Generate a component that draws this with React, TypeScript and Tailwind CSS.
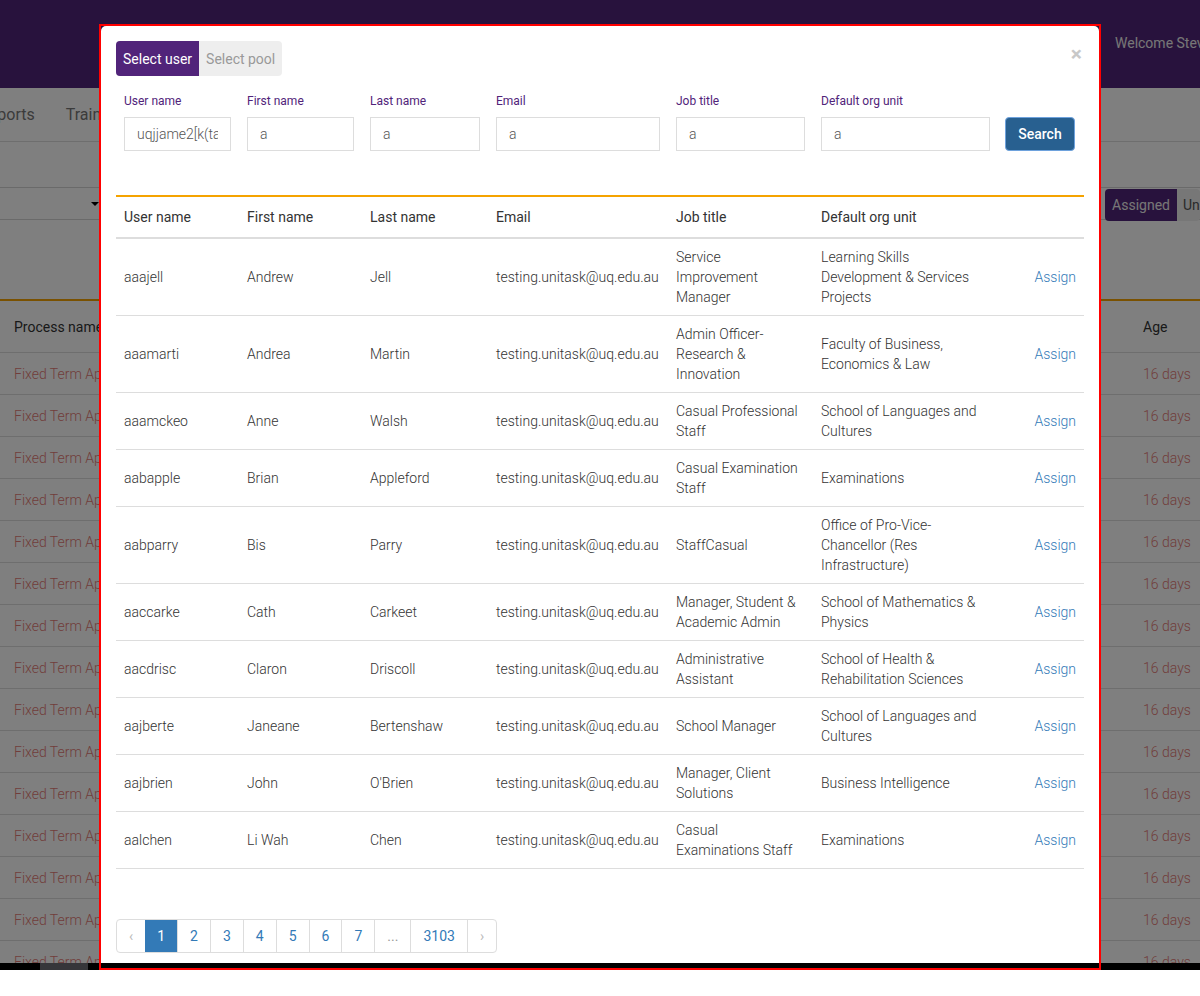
import React from 'react';

const users = [
  { id: 'aaajell', first: 'Andrew', last: 'Jell', job: 'Service Improvement Manager', unit: 'Learning Skills Development & Services Projects' },
  { id: 'aaamarti', first: 'Andrea', last: 'Martin', job: 'Admin Officer-Research & Innovation', unit: 'Faculty of Business, Economics & Law' },
  { id: 'aaamckeo', first: 'Anne', last: 'Walsh', job: 'Casual Professional Staff', unit: 'School of Languages and Cultures' },
  { id: 'aabapple', first: 'Brian', last: 'Appleford', job: 'Casual Examination Staff', unit: 'Examinations' },
  { id: 'aabparry', first: 'Bis', last: 'Parry', job: 'StaffCasual', unit: 'Office of Pro-Vice-Chancellor (Res Infrastructure)' },
  { id: 'aaccarke', first: 'Cath', last: 'Carkeet', job: 'Manager, Student & Academic Admin', unit: 'School of Mathematics & Physics' },
  { id: 'aacdrisc', first: 'Claron', last: 'Driscoll', job: 'Administrative Assistant', unit: 'School of Health & Rehabilitation Sciences' },
  { id: 'aajberte', first: 'Janeane', last: 'Bertenshaw', job: 'School Manager', unit: 'School of Languages and Cultures' },
  { id: 'aajbrien', first: 'John', last: "O'Brien", job: 'Manager, Client Solutions', unit: 'Business Intelligence' },
  { id: 'aalchen', first: 'Li Wah', last: 'Chen', job: 'Casual Examinations Staff', unit: 'Examinations' },
];

const filters = [
  { label: 'User name', value: 'uqjjame2[k(task' },
  { label: 'First name', value: 'a' },
  { label: 'Last name', value: 'a' },
  { label: 'Email', value: 'a' },
  { label: 'Job title', value: 'a' },
  { label: 'Default org unit', value: 'a' },
];

const cols = 'grid grid-cols-[123px_123px_126px_180px_145px_185px_86px]';

const pages = ['1', '2', '3', '4', '5', '6', '7', '...', '3103'];

export default function App() {
  return (
    <div className="relative h-[970px] overflow-hidden bg-white font-['Roboto',sans-serif] text-sm">
      {/* Page behind the modal */}
      <header className="h-[88px] bg-[#51247a] flex justify-end pt-[33px] pr-0">
        <span className="text-[#eee] text-sm w-[85px] whitespace-nowrap overflow-hidden">Welcome Steve</span>
      </header>
      <nav className="h-[54px] border-b border-[#ddd] flex items-center gap-[31px] text-base text-[#777]">
        <span className="ml-[-21px]">Reports</span>
        <span>Training</span>
      </nav>
      <div className="h-[45px]" />
      <div className="h-[33px] border-y border-[#d4d4d4] flex items-center justify-between">
        <div className="w-[105px] flex justify-end pr-[6px]">
          <span className="border-x-[4px] border-t-[4px] border-x-transparent border-t-black" />
        </div>
        <div className="flex h-[32px] mt-[2px] rounded overflow-hidden">
          <span className="bg-[#51247a] text-[#eee] px-[7px] leading-[32px]">Assigned</span>
          <span className="bg-[#eee] text-[#555] px-[6px] leading-[32px] w-[23px] overflow-hidden">Unassigned</span>
        </div>
      </div>
      <div className="h-[79px]" />
      <div className="border-t-2 border-[#f5a300]">
        <div className="flex justify-between h-[52px] items-center border-b border-[#ddd] text-[#333]">
          <span className="pl-[14px]">Process name</span>
          <span className="w-[57px]">Age</span>
        </div>
        {Array.from({ length: 15 }).map((_, i) => (
          <div key={i} className="flex justify-between h-[42px] items-center border-b border-[#ddd] text-[#e37b76] font-light">
            <span className="pl-[14px]">Fixed Term Appointment</span>
            <span className="w-[57px]">16 days</span>
          </div>
        ))}
      </div>

      {/* Backdrop */}
      <div className="absolute inset-0 bg-black/50" />

      {/* Modal */}
      <div className="absolute left-[101px] top-[26px] w-[998px] h-[960px] bg-white rounded-[5px] p-[15px]">
        <div className="flex justify-between">
          <div className="flex rounded bg-[#eee] h-[35px]">
            <button className="px-[7px] rounded-l bg-[#51247a] text-white">Select user</button>
            <button className="px-[7px] text-[#999]">Select pool</button>
          </div>
          <button className="text-[21px] font-bold leading-none text-[#c8c8c8] mr-[2px] mt-[3px] h-[20px]">×</button>
        </div>

        <div className={`${cols} mt-[17px]`}>
          {filters.map((f) => (
            <div key={f.label} className="px-2">
              <label className="block text-xs leading-[17px] text-[#51247a] mb-[7px]">{f.label}</label>
              <input
                readOnly
                value={f.value}
                className="w-full h-[34px] border border-[#ddd] px-3 text-sm font-light text-[#555] outline-none"
              />
            </div>
          ))}
          <div className="pl-[7px] pt-[24px]">
            <button className="w-[70px] h-[34px] rounded bg-[#286090] border border-[#6ea2dd] text-white font-medium">Search</button>
          </div>
        </div>

        <div className="mt-[44px] border-t-2 border-[#f5a300]">
          <div className={`${cols} border-b-2 border-[#ddd] text-[#333] leading-5`}>
            {['User name', 'First name', 'Last name', 'Email', 'Job title', 'Default org unit', ''].map((h, i) => (
              <div key={i} className="px-2 py-[10px]">{h}</div>
            ))}
          </div>
          {users.map((u) => (
            <div key={u.id} className={`${cols} border-b border-[#ddd] leading-5 font-light text-[#333] items-center`}>
              <div className="px-2 py-2">{u.id}</div>
              <div className="px-2 py-2">{u.first}</div>
              <div className="px-2 py-2">{u.last}</div>
              <div className="px-2 py-2 whitespace-nowrap">testing.unitask@uq.edu.au</div>
              <div className="pl-2 pr-[12px] py-2">{u.job}</div>
              <div className="px-2 py-2">{u.unit}</div>
              <div className="px-2 py-2 text-right">
                <a className="text-[#337ab7] cursor-pointer">Assign</a>
              </div>
            </div>
          ))}
        </div>

        <div className="mt-[50px] flex">
          <div className="flex rounded border border-[#ddd] overflow-hidden leading-5 h-[34px]">
            <span className="px-3 py-[6px] text-[#bbb]">‹</span>
            {pages.map((p) => (
              <span
                key={p}
                className={
                  p === '1'
                    ? 'px-3 py-[6px] bg-[#337ab7] text-white'
                    : p === '...'
                    ? 'px-3 py-[6px] border-l border-[#ddd] text-[#999]'
                    : 'px-3 py-[6px] border-l border-[#ddd] text-[#337ab7]'
                }
              >
                {p}
              </span>
            ))}
            <span className="px-3 py-[6px] border-l border-[#ddd] text-[#bbb]">›</span>
          </div>
        </div>
      </div>

      {/* Horizontal scrollbar */}
      <div className="absolute left-0 right-0 bottom-0 h-[7px] bg-black">
        <div className="ml-[40px] w-[48px] h-full bg-[#36363a]" />
      </div>

      {/* Highlight frame */}
      <div className="absolute left-[99px] top-[24px] w-[1002px] h-[946px] border-2 border-[#ff0000] pointer-events-none" />
    </div>
  );
}
